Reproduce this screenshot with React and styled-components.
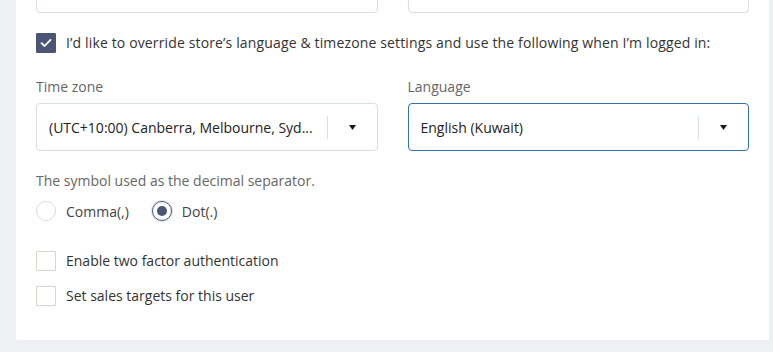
import React from "react";
import styled, { createGlobalStyle } from "styled-components";

const Global = createGlobalStyle`
  html, body { margin: 0; padding: 0; background: #eef0f4; }
  body { font-family: "Open Sans", "Noto Sans", sans-serif; font-size: 14px; color: #333; }
  * { box-sizing: border-box; }
`;

const Page = styled.div`
  height: 352px;
  overflow: hidden;
  display: flex;
  flex-direction: column;
  justify-content: flex-end;
  padding: 0 4px 12px 16px;
`;

const Card = styled.section`
  background: #fff;
  padding: 20px 20px 34px 20px;
  display: flex;
  flex-direction: column;
  border-radius: 2px;
`;

const Grid = styled.div`
  display: grid;
  grid-template-columns: minmax(0, 1fr) minmax(0, 1fr);
  column-gap: 30px;
`;

const TextInput = styled.div`
  height: 48px;
  border: 1px solid #d4e0de;
  border-radius: 4px;
  background: #fff;
`;

const CheckRow = styled.label`
  display: flex;
  align-items: center;
  gap: 10px;
  height: 20px;
  margin-top: ${(p) => p.$mt || 0}px;
  line-height: 20px;
  color: #333;
  letter-spacing: ${(p) => p.$spacing || 0}px;
  white-space: nowrap;
`;

const Box = styled.span`
  width: 20px;
  height: 20px;
  flex: none;
  border-radius: 1px;
  display: flex;
  align-items: center;
  justify-content: center;
  background: ${(p) => (p.$checked ? "#4b5677" : "#fff")};
  border: 1px solid ${(p) => (p.$checked ? "#4b5677" : "#d8d3cf")};
`;

const Field = styled.div`
  display: flex;
  flex-direction: column;
  margin-top: 24px;
  min-width: 0;
`;

const Label = styled.div`
  color: #666;
  line-height: 20px;
  margin-bottom: 6px;
`;

const Select = styled.div`
  height: 48px;
  border: 1px solid ${(p) => (p.$focused ? "#2f72b6" : "#d4e0de")};
  border-radius: 4px;
  display: flex;
  align-items: center;
  padding-left: 12px;
  background: #fff;
`;

const Value = styled.div`
  flex: 1;
  min-width: 0;
  white-space: nowrap;
  color: #222;
  margin-right: 10px;
`;

const Separator = styled.span`
  width: 1px;
  height: 23px;
  background: #d6e1df;
  flex: none;
`;

const Caret = styled.span`
  width: 49px;
  flex: none;
  display: flex;
  align-items: center;
  justify-content: center;
`;

const Hint = styled.div`
  margin-top: 20px;
  color: #666;
  line-height: 20px;
`;

const RadioGroup = styled.div`
  display: flex;
  gap: 23px;
  margin-top: 10px;
`;

const RadioItem = styled.label`
  display: flex;
  align-items: center;
  gap: 10px;
  height: 20px;
  color: #444;
`;

const Circle = styled.span`
  width: 20px;
  height: 20px;
  border-radius: 50%;
  flex: none;
  display: flex;
  align-items: center;
  justify-content: center;
  border: 1px solid ${(p) => (p.$checked ? "#4b5677" : "#dedbd6")};
  box-shadow: ${(p) => (p.$checked ? "0 0 0 1px rgba(120,140,190,0.25)" : "none")};
  &::after {
    content: "";
    display: ${(p) => (p.$checked ? "block" : "none")};
    width: 10px;
    height: 10px;
    border-radius: 50%;
    background: #4b5677;
  }
`;

const Check = () => (
  <svg width="12" height="10" viewBox="0 0 12 10">
    <path d="M1.5 5.2 L4.6 8 L10.5 1.8" fill="none" stroke="#fff" strokeWidth="1.8" strokeLinecap="round" strokeLinejoin="round" />
  </svg>
);

const Triangle = () => (
  <svg width="7" height="5" viewBox="0 0 7 5">
    <path d="M0 0 H7 L3.5 5 Z" fill="#1a1a1a" />
  </svg>
);

export default function App() {
  return (
    <>
      <Global />
      <Page>
        <Card>
          <Grid>
            <TextInput />
            <TextInput />
          </Grid>
          <CheckRow $mt={20} $spacing={0.14}>
            <Box $checked>
              <Check />
            </Box>
            I’d like to override store’s language &amp; timezone settings and use the following when I’m logged in:
          </CheckRow>
          <Grid>
            <Field>
              <Label>Time zone</Label>
              <Select>
                <Value>(UTC+10:00) Canberra, Melbourne, Syd...</Value>
                <Separator />
                <Caret>
                  <Triangle />
                </Caret>
              </Select>
            </Field>
            <Field>
              <Label>Language</Label>
              <Select $focused>
                <Value>English (Kuwait)</Value>
                <Separator />
                <Caret>
                  <Triangle />
                </Caret>
              </Select>
            </Field>
          </Grid>
          <Hint>The symbol used as the decimal separator.</Hint>
          <RadioGroup>
            <RadioItem>
              <Circle />
              Comma(,)
            </RadioItem>
            <RadioItem>
              <Circle $checked />
              Dot(.)
            </RadioItem>
          </RadioGroup>
          <CheckRow $mt={30}>
            <Box />
            Enable two factor authentication
          </CheckRow>
          <CheckRow $mt={15}>
            <Box />
            Set sales targets for this user
          </CheckRow>
        </Card>
      </Page>
    </>
  );
}
